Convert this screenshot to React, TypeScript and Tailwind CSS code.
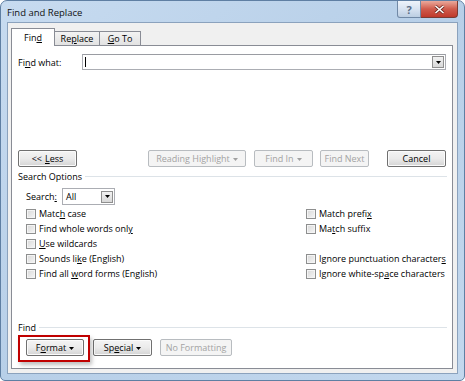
import React from 'react';

const Arrow = ({ disabled = false }: { disabled?: boolean }) => (
  <svg width="5" height="3" viewBox="0 0 5 3" className="ml-[3px] mt-[1px]">
    <polygon points="0,0 5,0 2.5,3" fill={disabled ? '#a0a0a0' : '#000'} />
  </svg>
);

const Key = ({ children }: { children: React.ReactNode }) => (
  <span className="underline underline-offset-[1px]">{children}</span>
);

function Btn({
  className,
  disabled = false,
  children
}: {
  className: string;
  disabled?: boolean;
  children: React.ReactNode;
}) {
  const look = disabled
    ? 'border-[#b8bcc0] bg-[#f4f4f4] text-[#a3a3a3]'
    : 'border-[#707070] bg-gradient-to-b from-[#f4f4f4] via-[#ebebeb] to-[#d4d4d4] text-black shadow-[inset_0_0_0_1px_#fbfbfb]';
  return (
    <div className={`h-[17px] rounded-[2px] border flex items-center justify-center ${look} ${className}`}>
      {children}
    </div>
  );
}

const Check = ({ children }: { children: React.ReactNode }) => (
  <div className="h-[15px] flex items-center">
    <span className="w-[10px] h-[10px] border border-[#8e8f8f] bg-gradient-to-br from-[#d8d8d8] to-[#f6f6f6] shadow-[inset_0_0_0_1px_#f4f4f4]" />
    <span className="ml-[3px]">{children}</span>
  </div>
);

const DropBtn = () => (
  <div className="w-[12px] h-[12px] border border-[#8f8f8f] bg-gradient-to-b from-[#f2f2f2] to-[#d8d8d8] flex items-center justify-center">
    <svg width="5" height="3" viewBox="0 0 5 3">
      <polygon points="0,0 5,0 2.5,3" fill="#000" />
    </svg>
  </div>
);

const leftOptions: React.ReactNode[] = [
  <>Matc<Key>h</Key> case</>,
  <>Find whole words onl<Key>y</Key></>,
  <><Key>U</Key>se wildcards</>,
  <>Sounds li<Key>k</Key>e (English)</>,
  <>Find all <Key>w</Key>ord forms (English)</>
];

export default function App() {
  return (
    <div className="w-[465px] h-[381px] rounded-t-[7px] rounded-b-[5px] border border-[#5f7fa3] bg-gradient-to-br from-[#c7dbf0] via-[#b7cfe8] to-[#c3d8ee] flex flex-col px-[6px] pb-[6px] text-[9px] text-black font-['Open_Sans',sans-serif] leading-none">
      {/* title bar */}
      <div className="h-[21px] flex items-start justify-between">
        <span className="pt-[7px] text-[9.5px] text-[#111]">Find and Replace</span>
        <div className="flex">
          <div className="w-[24px] h-[17px] rounded-bl-[3px] border border-[#7189a6] border-t-0 bg-gradient-to-b from-[#eef3fa] via-[#d8e3f1] to-[#bccee2] flex items-center justify-center text-[#5b6e86] text-[11px] font-bold">
            ?
          </div>
          <div className="w-[37px] h-[17px] rounded-br-[4px] border border-[#7a3b33] border-t-0 border-l-0 bg-gradient-to-b from-[#e9a99c] via-[#cf5b4c] to-[#c0392b] flex items-center justify-center">
            <svg width="11" height="9" viewBox="0 0 11 9">
              <path d="M1.5 1 L9.5 8 M9.5 1 L1.5 8" stroke="#6b2a22" strokeWidth="3" />
              <path d="M1.5 1 L9.5 8 M9.5 1 L1.5 8" stroke="#fff" strokeWidth="1.6" />
            </svg>
          </div>
        </div>
      </div>

      {/* client area */}
      <div className="flex-1 bg-[#f0f0f0] border border-[#8ba2bd] pl-[3px] pr-[4px] pt-[6px] pb-[4px] flex flex-col">
        {/* tabs */}
        <div className="h-[17px] flex items-end -mb-px">
          <div className="relative z-10 w-[44px] h-[18px] bg-white border border-b-0 border-[#898c95] flex items-center justify-center pb-[1px]">
            Fin<Key>d</Key>
          </div>
          <div className="w-[46px] h-[15px] -ml-px bg-gradient-to-b from-[#f3f3f3] to-[#e2e2e2] border border-[#898c95] flex items-center justify-center">
            Re<Key>p</Key>lace
          </div>
          <div className="w-[42px] h-[15px] -ml-px bg-gradient-to-b from-[#f3f3f3] to-[#e2e2e2] border border-[#898c95] flex items-center justify-center">
            <Key>G</Key>o To
          </div>
        </div>

        {/* panel */}
        <div className="flex-1 bg-white border border-[#898c95] flex flex-col">
          <div className="mt-[8px] pl-[6px] pr-[6px] flex items-center">
            <span className="w-[64px]">
              Fi<Key>n</Key>d what:
            </span>
            <div className="flex-1 h-[16px] border border-[#abadb3] border-t-[#9a9ca2] flex items-center justify-between pl-[2px] pr-[1px]">
              <span className="w-px h-[10px] bg-black" />
              <DropBtn />
            </div>
          </div>

          <div className="mt-[80px] pl-[6px] pr-[6px] flex items-center">
            <Btn className="w-[59px]">
              &lt;&lt; <span className="ml-[3px]"><Key>L</Key>ess</span>
            </Btn>
            <div className="flex-1" />
            <Btn disabled className="w-[98px]">
              Reading Highlight <Arrow disabled />
            </Btn>
            <Btn disabled className="w-[59px] ml-[8px]">
              Find In <Arrow disabled />
            </Btn>
            <Btn disabled className="w-[49px] ml-[7px]">
              Find Next
            </Btn>
            <Btn className="w-[59px] ml-[18px]">Cancel</Btn>
          </div>

          <div className="mt-[3px] h-[12px] pl-[6px] pr-[5px] flex items-center">
            <span>Search Options</span>
            <span className="flex-1 h-px bg-[#dde3e8] ml-[3px]" />
          </div>

          <div className="mt-[6px] pl-[14px] flex items-center">
            <span className="w-[36px]">
              Search<Key>:</Key>
            </span>
            <div className="w-[53px] h-[17px] border border-[#abadb3] flex items-center justify-between pl-[3px] pr-[1px]">
              <span>All</span>
              <DropBtn />
            </div>
          </div>

          <div className="mt-[1px] pl-[14px] flex">
            <div className="w-[280px] flex flex-col">
              {leftOptions.map((o, i) => (
                <Check key={i}>{o}</Check>
              ))}
            </div>
            <div className="flex flex-col">
              <Check>
                Match prefi<Key>x</Key>
              </Check>
              <Check>
                Ma<Key>t</Key>ch suffix
              </Check>
              <div className="h-[15px]" />
              <Check>
                Ignore punctuation character<Key>s</Key>
              </Check>
              <Check>
                Ignore white-sp<Key>a</Key>ce characters
              </Check>
            </div>
          </div>

          <div className="mt-[40px] h-[12px] pl-[6px] pr-[5px] flex items-center">
            <span>Find</span>
            <span className="flex-1 h-px bg-[#dde3e8] ml-[3px]" />
          </div>

          <div className="relative mt-[6px] pl-[14px] flex items-center">
            <Btn className="w-[58px]">
              F<Key>o</Key>rmat <Arrow />
            </Btn>
            <Btn className="w-[59px] ml-[9px]">
              Sp<Key>e</Key>cial <Arrow />
            </Btn>
            <Btn disabled className="w-[72px] ml-[8px]">
              No Formatting
            </Btn>
            <div className="absolute left-[6px] top-[-4px] w-[72px] h-[27px] border-2 border-[#c00000] shadow-[2px_3px_4px_rgba(0,0,0,0.25)]" />
          </div>
        </div>
      </div>
    </div>
  );
}
